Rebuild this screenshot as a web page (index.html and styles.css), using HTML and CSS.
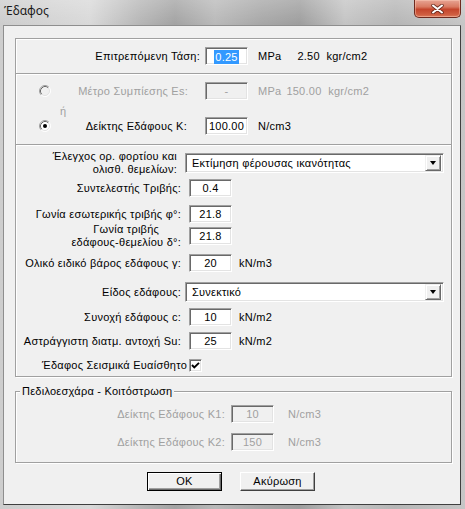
FILE: index.html
```html
<!DOCTYPE html>
<html>
<head>
<meta charset="utf-8">
<title>Έδαφος</title>
<link rel="stylesheet" href="styles.css">
</head>
<body>
<div class="window">
  <div class="titlebar">
    <span class="title">Έδαφος</span>
    <span class="close">
      <svg width="13" height="10" viewBox="0 0 13 10">
        <path d="M2 1.5 L11 8.5 M11 1.5 L2 8.5" stroke="#4a1a12" stroke-width="3.6" stroke-linecap="round" opacity="0.75"/>
        <path d="M2 1.5 L11 8.5 M11 1.5 L2 8.5" stroke="#fff" stroke-width="2" stroke-linecap="round"/>
      </svg>
    </span>
  </div>
  <div class="client">
    <div class="mainbox etched">
      <div class="sec sec1">
        <div class="row">
          <span class="lbl">Επιτρεπόμενη Τάση:</span>
          <span class="field"><span class="hl">0.25</span></span>
          <span class="unit">MPa</span>
          <span class="unit-b">2.50&nbsp; kgr/cm2</span>
        </div>
      </div>
      <div class="sec sec2">
        <div class="row">
          <svg class="radio" width="12" height="12" viewBox="0 0 12 12">
            <circle cx="6" cy="6" r="5" fill="#f0f0f0"/>
            <path d="M2.11 9.89 A5.5 5.5 0 0 1 9.89 2.11" fill="none" stroke="#a0a0a0"/>
            <path d="M9.89 2.11 A5.5 5.5 0 0 1 2.11 9.89" fill="none" stroke="#fff"/>
            <path d="M2.82 9.18 A4.5 4.5 0 0 1 9.18 2.82" fill="none" stroke="#696969"/>
            <path d="M9.18 2.82 A4.5 4.5 0 0 1 2.82 9.18" fill="none" stroke="#e3e3e3"/>
          </svg>
          <span class="lbl dis">Μέτρο Συμπίεσης Es:</span>
          <span class="field disabled">-</span>
          <span class="unit dis">MPa</span>
          <span class="unit-c dis">150.00&nbsp; kgr/cm2</span>
        </div>
        <div class="or-row dis">ή</div>
        <div class="row">
          <svg class="radio" width="12" height="12" viewBox="0 0 12 12">
            <circle cx="6" cy="6" r="5" fill="#fff"/>
            <path d="M2.11 9.89 A5.5 5.5 0 0 1 9.89 2.11" fill="none" stroke="#a0a0a0"/>
            <path d="M9.89 2.11 A5.5 5.5 0 0 1 2.11 9.89" fill="none" stroke="#fff"/>
            <path d="M2.82 9.18 A4.5 4.5 0 0 1 9.18 2.82" fill="none" stroke="#696969"/>
            <path d="M9.18 2.82 A4.5 4.5 0 0 1 2.82 9.18" fill="none" stroke="#e3e3e3"/>
            <circle cx="6" cy="6" r="2" fill="#000"/>
          </svg>
          <span class="lbl lbl-k">Δείκτης Εδάφους Κ:</span>
          <span class="field">100.00</span>
          <span class="unit">N/cm3</span>
        </div>
      </div>
      <div class="sec sec3">
        <div class="row r1">
          <span class="lbl lbl-tight"><span class="two right">Έλεγχος ορ. φορτίου και<br>ολισθ. θεμελίων:</span></span>
          <span class="combo"><span class="combo-text">Εκτίμηση φέρουσας ικανότητας</span><span class="combo-btn"><span class="tri"></span></span></span>
        </div>
        <div class="row r2">
          <span class="lbl">Συντελεστής Τριβής:</span>
          <span class="field f3">0.4</span>
        </div>
        <div class="row r3">
          <span class="lbl">Γωνία εσωτερικής τριβής φ°:</span>
          <span class="field f3">21.8</span>
        </div>
        <div class="row r4">
          <span class="lbl"><span class="two center">Γωνία τριβής<br>εδάφους-θεμελίου δ°:</span></span>
          <span class="field f3">21.8</span>
        </div>
        <div class="row r5">
          <span class="lbl">Ολικό ειδικό βάρος εδάφους γ:</span>
          <span class="field f3">20</span>
          <span class="unit3">kN/m3</span>
        </div>
        <div class="row r6">
          <span class="lbl">Είδος εδάφους:</span>
          <span class="combo"><span class="combo-text">Συνεκτικό</span><span class="combo-btn"><span class="tri"></span></span></span>
        </div>
        <div class="row r7">
          <span class="lbl">Συνοχή εδάφους c:</span>
          <span class="field f3">10</span>
          <span class="unit3">kN/m2</span>
        </div>
        <div class="row r8">
          <span class="lbl">Αστράγγιστη διατμ. αντοχή Su:</span>
          <span class="field f3">25</span>
          <span class="unit3">kN/m2</span>
        </div>
        <div class="row r9">
          <span class="lbl lbl-chk">Έδαφος Σεισμικά Ευαίσθητο</span>
          <span class="chk">
            <svg width="9" height="9" viewBox="0 0 9 9"><polyline points="1,4 3.3,6.5 8,1.8" fill="none" stroke="#000" stroke-width="1.9"/></svg>
          </span>
        </div>
      </div>
    </div>

    <div class="group2 etched">
      <span class="caption">Πεδιλοεσχάρα - Κοιτόστρωση</span>
      <div class="row g-r1">
        <span class="lbl dis">Δείκτης Εδάφους Κ1:</span>
        <span class="field disabled g-field">10</span>
        <span class="unit-g dis">N/cm3</span>
      </div>
      <div class="row g-r2">
        <span class="lbl dis">Δείκτης Εδάφους Κ2:</span>
        <span class="field disabled g-field">150</span>
        <span class="unit-g dis">N/cm3</span>
      </div>
    </div>

    <div class="buttons">
      <span class="btn default">OK</span>
      <span class="btn">Ακύρωση</span>
    </div>
  </div>
</div>
</body>
</html>
```

FILE: styles.css
```css
* { box-sizing: border-box; }

html, body {
  margin: 0;
  padding: 0;
}

body {
  width: 465px;
  height: 509px;
  overflow: hidden;
  font-family: "Liberation Sans", Arial, sans-serif;
  font-size: 11px;
  line-height: 13px;
  letter-spacing: 0.25px;
  color: #000;
}

.window {
  width: 465px;
  height: 509px;
  display: flex;
  flex-direction: column;
  background:
    linear-gradient(180deg, rgba(255,255,255,0.22) 0px, rgba(255,255,255,0) 24px),
    linear-gradient(90deg, #cdcdcd 0px, #d9d9d9 90px, #b6b6b6 140px, #a3a3a3 175px, #b9b9b9 215px, #a7a7a7 262px, #9e9e9e 300px, #c4c4c4 345px, #b6b6b6 395px, #c6c6c6 465px);
}

/* title bar */
.titlebar {
  height: 25px;
  flex: none;
  display: flex;
  justify-content: space-between;
  align-items: flex-start;
  padding: 0 4px;
}

.title {
  font-family: "Noto Sans", "Open Sans", sans-serif;
  font-size: 12px;
  line-height: 16px;
  letter-spacing: 0;
  margin-top: 3px;
  color: #1a1a1a;
}

.close {
  width: 47px;
  height: 18px;
  display: flex;
  align-items: center;
  justify-content: center;
  border: 1px solid #6e2a1f;
  border-top: none;
  border-radius: 0 0 5px 5px;
  background: linear-gradient(180deg, #e7a494 0%, #d97a62 40%, #c4452c 55%, #cf5d40 85%, #dc7a5c 100%);
  box-shadow: inset 0 0 0 1px rgba(255, 210, 190, 0.45);
}

/* client area */
.client {
  flex: 1;
  margin: 0 4px 4px 3px;
  border: 1px solid;
  border-color: #8e8e8e #3f3f3f #3f3f3f #8e8e8e;
  background: #f0f0f0;
  display: flex;
  flex-direction: column;
}

.etched {
  border: 1px solid #a0a0a0;
  box-shadow: inset 1px 1px #fff, 1px 1px #fff;
}

.mainbox {
  margin: 12px 8px 0 11px;
}

.sec + .sec {
  border-top: 1px solid #a0a0a0;
  box-shadow: inset 0 1px #fff;
}

.row {
  display: flex;
  align-items: center;
}

.lbl {
  flex: none;
  display: flex;
  justify-content: flex-end;
  white-space: nowrap;
}

.dis { color: #a0a0a0; }

.two { display: block; }
.two.right { text-align: right; }
.two.center { text-align: center; }

.field {
  flex: none;
  width: 43px;
  height: 18px;
  background: #fff;
  border: 1px solid;
  border-color: #a0a0a0 #fff #fff #a0a0a0;
  box-shadow: inset 1px 1px #696969, inset -1px -1px #e3e3e3;
  display: flex;
  align-items: center;
  justify-content: center;
  padding-top: 1px;
}

.field.disabled {
  background: #f0f0f0;
  color: #a0a0a0;
}

.hl {
  background: #3399ff;
  color: #fff;
  padding: 0 1px;
  line-height: 14px;
}

/* section 1 */
.sec1 { padding: 8px 0; }
.sec1 .lbl { width: 184px; margin-right: 5px; }
.unit { margin-left: 10px; }
.unit-b { margin-left: 16px; }
.unit-c { margin-left: 5px; }

/* section 2 */
.sec2 { padding: 8px 0 9px 23px; }
.radio { flex: none; display: block; }
.sec2 .lbl { width: 137px; margin-right: 17px; }
.sec2 .lbl-k { width: 136px; margin-right: 18px; }
.or-row {
  height: 17px;
  padding: 6px 0 0 21px;
  line-height: 11px;
}

/* section 3 */
.sec3 { padding: 5px 0 4px 0; }
.sec3 .lbl { width: 165px; }
.sec3 .lbl-tight { padding-right: 4px; }
.sec3 .lbl-chk { width: 171px; }
.f3 { margin-left: 8px; }
.unit3 { margin-left: 7px; }

.r2 { margin-top: 3px; }
.r3 { margin-top: 8px; }
.r4 { margin-top: 0; }
.r5 { margin-top: 5px; }
.r6 { margin-top: 10px; }
.r7 { margin-top: 6px; }
.r8 { margin-top: 6px; }
.r9 { margin-top: 9px; }

.combo {
  flex: none;
  margin-left: 4px;
  width: 259px;
  height: 20px;
  background: #fff;
  border: 1px solid;
  border-color: #a0a0a0 #fff #fff #a0a0a0;
  box-shadow: inset 1px 1px #696969, inset -1px -1px #e3e3e3;
  padding: 1px 2px 2px 1px;
  display: flex;
  align-items: center;
}

.combo-text {
  flex: 1;
  padding-left: 5px;
  padding-top: 1px;
  white-space: nowrap;
}

.combo-btn {
  flex: none;
  width: 16px;
  height: 16px;
  background: #f0f0f0;
  border: 1px solid;
  border-color: #f0f0f0 #696969 #696969 #f0f0f0;
  box-shadow: inset 1px 1px #fff, inset -1px -1px #a0a0a0;
  display: flex;
  align-items: center;
  justify-content: center;
}

.tri {
  width: 0;
  height: 0;
  border-left: 3.5px solid transparent;
  border-right: 3.5px solid transparent;
  border-top: 4px solid #000;
  margin-top: 1px;
}

.chk {
  flex: none;
  margin-left: 2px;
  width: 13px;
  height: 13px;
  background: #fff;
  border: 1px solid;
  border-color: #a0a0a0 #fff #fff #a0a0a0;
  box-shadow: inset 1px 1px #696969, inset -1px -1px #e3e3e3;
  display: flex;
  align-items: center;
  justify-content: center;
}

.chk svg { display: block; }

/* lower group */
.group2 {
  margin: 14px 8px 0 11px;
  padding-bottom: 11px;
}

.caption {
  display: block;
  width: fit-content;
  margin: -7px 0 0 4px;
  padding: 0 2px;
  background: #f0f0f0;
  line-height: 13px;
}

.group2 .lbl { width: 209px; }
.g-field { margin-left: 6px; }
.unit-g { margin-left: 14px; }
.g-r1 { margin-top: 7px; }
.g-r2 { margin-top: 10px; }

/* buttons */
.buttons {
  display: flex;
  gap: 18px;
  padding-left: 143px;
  margin-top: 9px;
}

.btn {
  width: 75px;
  height: 19px;
  display: flex;
  align-items: center;
  justify-content: center;
  background: #f0f0f0;
  border: 1px solid;
  border-color: #fff #404040 #404040 #fff;
  box-shadow: inset -1px -1px #a0a0a0;
}

.btn.default {
  border-color: #000;
  box-shadow: inset 1px 1px #fff, inset -1px -1px #696969, inset -2px -2px #a0a0a0;
}
```
